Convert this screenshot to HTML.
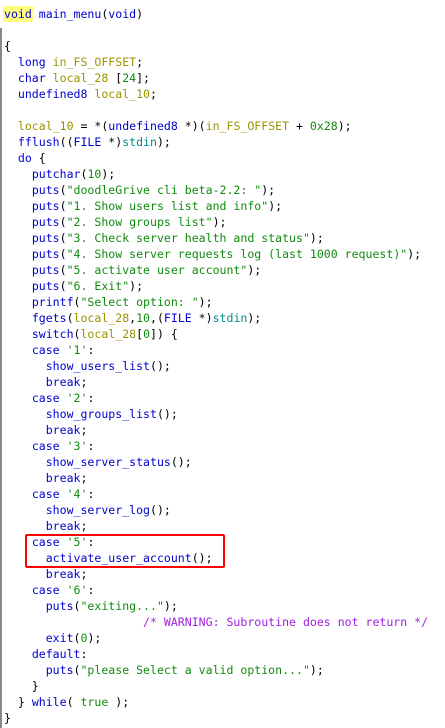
<!DOCTYPE html><html><head><style>
body{margin:0;background:#fff;width:445px;height:722px;overflow:hidden;position:relative}
pre{margin:0;position:absolute;left:4px;top:6px;font-family:"DejaVu Sans Mono","Liberation Mono",monospace;font-size:11.55px;line-height:16px;color:#000}
.k{color:#0000d0}.v{color:#9a9400}.s{color:#108a10}.t{color:#008b8b}.c{color:#a020e0}
.h{background:#ffff80;outline:1px solid #ffff80}
#bar{position:absolute;left:0;top:28px;width:2px;height:700px;background:#888}
#box{position:absolute;left:25px;top:534px;width:196px;height:30px;border:2px solid #f00;border-radius:2px}
</style></head><body><div id="bar"></div>
<pre><span class="k h">void</span> <span class="k">main_menu</span>(<span class="k">void</span>)

{
  <span class="k">long</span> <span class="v">in_FS_OFFSET</span>;
  <span class="k">char</span> <span class="v">local_28</span> [<span class="s">24</span>];
  <span class="k">undefined8</span> <span class="v">local_10</span>;

  <span class="v">local_10</span> = *(<span class="k">undefined8</span> *)(<span class="v">in_FS_OFFSET</span> + <span class="s">0x28</span>);
  <span class="k">fflush</span>((<span class="k">FILE</span> *)<span class="t">stdin</span>);
  <span class="k">do</span> {
    <span class="k">putchar</span>(<span class="s">10</span>);
    <span class="k">puts</span>(<span class="s">"doodleGrive cli beta-2.2: "</span>);
    <span class="k">puts</span>(<span class="s">"1. Show users list and info"</span>);
    <span class="k">puts</span>(<span class="s">"2. Show groups list"</span>);
    <span class="k">puts</span>(<span class="s">"3. Check server health and status"</span>);
    <span class="k">puts</span>(<span class="s">"4. Show server requests log (last 1000 request)"</span>);
    <span class="k">puts</span>(<span class="s">"5. activate user account"</span>);
    <span class="k">puts</span>(<span class="s">"6. Exit"</span>);
    <span class="k">printf</span>(<span class="s">"Select option: "</span>);
    <span class="k">fgets</span>(<span class="v">local_28</span>,<span class="s">10</span>,(<span class="k">FILE</span> *)<span class="t">stdin</span>);
    <span class="k">switch</span>(<span class="v">local_28</span>[<span class="s">0</span>]) {
    <span class="k">case</span> <span class="s">'1'</span>:
      <span class="k">show_users_list</span>();
      <span class="k">break</span>;
    <span class="k">case</span> <span class="s">'2'</span>:
      <span class="k">show_groups_list</span>();
      <span class="k">break</span>;
    <span class="k">case</span> <span class="s">'3'</span>:
      <span class="k">show_server_status</span>();
      <span class="k">break</span>;
    <span class="k">case</span> <span class="s">'4'</span>:
      <span class="k">show_server_log</span>();
      <span class="k">break</span>;
    <span class="k">case</span> <span class="s">'5'</span>:
      <span class="k">activate_user_account</span>();
      <span class="k">break</span>;
    <span class="k">case</span> <span class="s">'6'</span>:
      <span class="k">puts</span>(<span class="s">"exiting..."</span>);
                    <span class="c">/* WARNING: Subroutine does not return */</span>
      <span class="k">exit</span>(<span class="s">0</span>);
    <span class="k">default</span>:
      <span class="k">puts</span>(<span class="s">"please Select a valid option..."</span>);
    }
  } <span class="k">while</span>( <span class="s">true</span> );
}</pre>
<div id="box"></div>
</body></html>
